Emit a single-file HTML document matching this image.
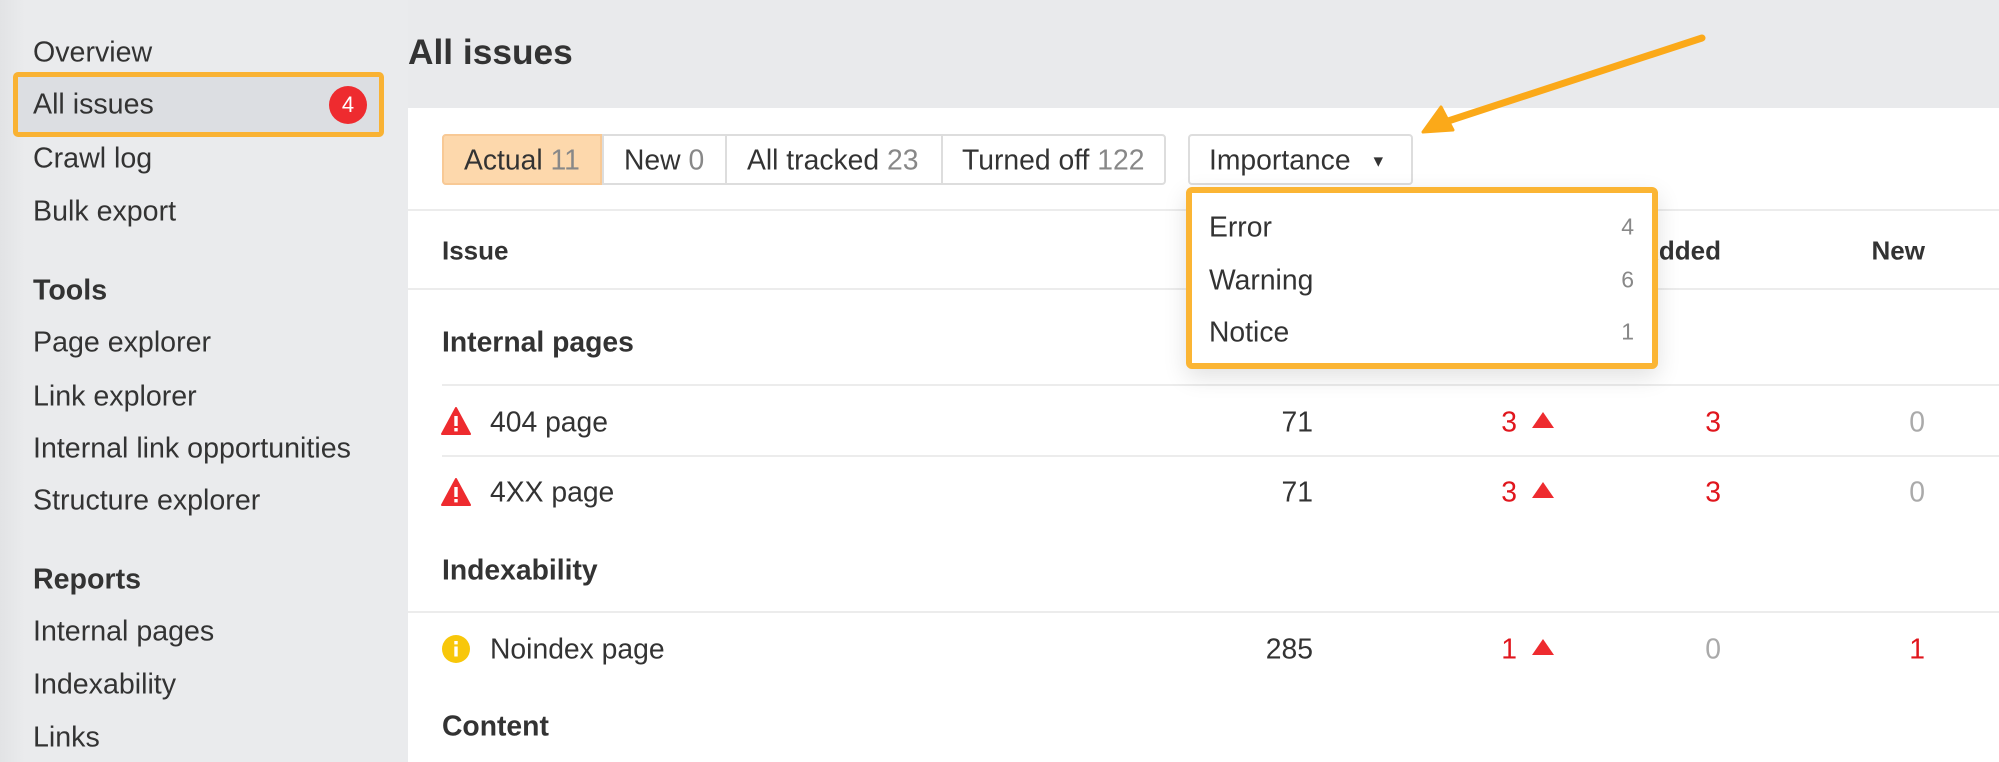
<!DOCTYPE html>
<html><head><meta charset="utf-8"><style>
*{margin:0;padding:0;box-sizing:border-box}
body{width:1999px;height:762px;overflow:hidden;background:#e9eaec;font-family:"Liberation Sans",Arial,sans-serif;color:#333;position:relative}
.a{position:absolute;white-space:nowrap}
.side{position:absolute;left:0;top:0;width:408px;height:762px;background:linear-gradient(90deg,#e2e3e5 0,#eaebed 25px,#eaebed 100%)}
.si{position:absolute;left:33px;font-size:28.6px;color:#333;transform:translateY(-50%);white-space:nowrap}
.sb{font-weight:bold}
.main{position:absolute;left:408px;top:108px;width:1591px;height:654px;background:#fff}
.t{font-size:28.3px;transform:translateY(-50%)}
.g{color:#888}
.r{color:#e0161d}
.hl{position:absolute;height:2px;background:#ececec}
</style></head><body>
<div class="side"></div>
<div class="si" style="top:53px">Overview</div>
<div class="a" style="left:13px;top:72px;width:371px;height:65px;border:5px solid #f9b233;border-radius:5px;background:#dcdee2"></div>
<div class="si" style="top:105px">All issues</div>
<div class="a" style="left:329px;top:86px;width:38px;height:38px;border-radius:50%;background:#ee2b2f;color:#fff;font-size:22px;text-align:center;line-height:38px">4</div>
<div class="si" style="top:159px">Crawl log</div>
<div class="si" style="top:212px">Bulk export</div>
<div class="si sb" style="top:291px">Tools</div>
<div class="si" style="top:343px">Page explorer</div>
<div class="si" style="top:397px">Link explorer</div>
<div class="si" style="top:449px">Internal link opportunities</div>
<div class="si" style="top:501px">Structure explorer</div>
<div class="si sb" style="top:580px">Reports</div>
<div class="si" style="top:632px">Internal pages</div>
<div class="si" style="top:685px">Indexability</div>
<div class="si" style="top:738px">Links</div>

<div class="a" style="left:408px;top:33px;font-size:35.3px;font-weight:bold;color:#333">All issues</div>
<div class="main"></div>

<!-- tabs -->
<div class="a" style="left:442px;top:134px;width:724px;height:51px;border:2px solid #ddd;border-radius:4px"></div>
<div class="a" style="left:442px;top:134px;width:160px;height:51px;background:#fdd8ac;border:2px solid #f8c995;border-radius:4px 0 0 4px"></div>
<div class="a" style="left:602px;top:134px;width:2px;height:51px;background:#ddd"></div>
<div class="a" style="left:725px;top:134px;width:2px;height:51px;background:#ddd"></div>
<div class="a" style="left:941px;top:134px;width:2px;height:51px;background:#ddd"></div>
<div class="a t" style="left:464px;top:160px">Actual <span class="g">11</span></div>
<div class="a t" style="left:624px;top:160px">New <span class="g">0</span></div>
<div class="a t" style="left:747px;top:160px">All tracked <span class="g">23</span></div>
<div class="a t" style="left:962px;top:160px">Turned off <span class="g">122</span></div>
<div class="a" style="left:1188px;top:134px;width:225px;height:51px;border:2px solid #ddd;border-radius:4px"></div>
<div class="a t" style="left:1209px;top:160px">Importance <span style="font-size:16px;margin-left:12px;position:relative;top:-3px">▼</span></div>

<div class="hl" style="left:408px;top:209px;width:1591px"></div>
<div class="a t" style="left:442px;top:251px;font-size:26px;font-weight:bold">Issue</div>
<div class="a t" style="right:278px;top:251px;font-size:26px;font-weight:bold">Added</div>
<div class="a t" style="right:74px;top:251px;font-size:26px;font-weight:bold">New</div>
<div class="hl" style="left:408px;top:288px;width:1591px"></div>
<div class="a t" style="left:442px;top:342px;font-weight:bold">Internal pages</div>
<div class="hl" style="left:442px;top:384px;width:1557px"></div>

<svg class="a" style="left:441px;top:406px" width="30" height="30" viewBox="0 0 30 30"><path d="M15 2 L29 28 L1 28 Z" fill="#ee2b2f" stroke="#ee2b2f" stroke-width="2" stroke-linejoin="round"/><rect x="13.3" y="10" width="3.4" height="10" fill="#fff"/><rect x="13.3" y="22" width="3.4" height="3.4" fill="#fff"/></svg>
<div class="a t" style="left:490px;top:422px">404 page</div>
<div class="a t" style="right:686px;top:422px">71</div>
<div class="a t r" style="right:482px;top:422px">3</div>
<svg class="a" style="left:1531px;top:411px" width="24" height="18"><path d="M12 1 L23 17 L1 17Z" fill="#ee2b2f"/></svg>
<div class="a t r" style="right:278px;top:422px">3</div>
<div class="a t" style="right:74px;top:422px;color:#aaa">0</div>
<div class="hl" style="left:442px;top:455px;width:1557px"></div>

<svg class="a" style="left:441px;top:477px" width="30" height="30" viewBox="0 0 30 30"><path d="M15 2 L29 28 L1 28 Z" fill="#ee2b2f" stroke="#ee2b2f" stroke-width="2" stroke-linejoin="round"/><rect x="13.3" y="10" width="3.4" height="10" fill="#fff"/><rect x="13.3" y="22" width="3.4" height="3.4" fill="#fff"/></svg>
<div class="a t" style="left:490px;top:492px">4XX page</div>
<div class="a t" style="right:686px;top:492px">71</div>
<div class="a t r" style="right:482px;top:492px">3</div>
<svg class="a" style="left:1531px;top:481px" width="24" height="18"><path d="M12 1 L23 17 L1 17Z" fill="#ee2b2f"/></svg>
<div class="a t r" style="right:278px;top:492px">3</div>
<div class="a t" style="right:74px;top:492px;color:#aaa">0</div>

<div class="a t" style="left:442px;top:570px;font-weight:bold">Indexability</div>
<div class="hl" style="left:408px;top:611px;width:1591px"></div>
<svg class="a" style="left:441px;top:634px" width="30" height="30"><circle cx="15" cy="15" r="14" fill="#f8c70a"/><rect x="13.3" y="7" width="3.4" height="3.4" fill="#fff"/><rect x="13.3" y="12.5" width="3.4" height="10" fill="#fff"/></svg>
<div class="a t" style="left:490px;top:649px">Noindex page</div>
<div class="a t" style="right:686px;top:649px">285</div>
<div class="a t r" style="right:482px;top:649px">1</div>
<svg class="a" style="left:1531px;top:638px" width="24" height="18"><path d="M12 1 L23 17 L1 17Z" fill="#ee2b2f"/></svg>
<div class="a t" style="right:278px;top:649px;color:#aaa">0</div>
<div class="a t r" style="right:74px;top:649px">1</div>
<div class="a t" style="left:442px;top:726px;font-weight:bold">Content</div>

<!-- dropdown -->
<div class="a" style="left:1186px;top:187px;width:472px;height:182px;background:#fff;border:6px solid #fbb534;border-radius:6px;box-shadow:0 8px 24px rgba(0,0,0,.12)"></div>
<div class="a t" style="left:1209px;top:227px">Error</div>
<div class="a t g" style="right:365px;top:227px;font-size:23px">4</div>
<div class="a t" style="left:1209px;top:280px">Warning</div>
<div class="a t g" style="right:365px;top:280px;font-size:23px">6</div>
<div class="a t" style="left:1209px;top:332px">Notice</div>
<div class="a t g" style="right:365px;top:332px;font-size:23px">1</div>

<!-- arrow -->
<svg class="a" style="left:0;top:0" width="1999" height="762"><line x1="1702" y1="38" x2="1442" y2="123" stroke="#fba919" stroke-width="7" stroke-linecap="round"/><path d="M1423 132 L1441 107 L1453 130 Z" fill="#fba919" stroke="#fba919" stroke-width="3" stroke-linejoin="round"/></svg>
</body></html>
